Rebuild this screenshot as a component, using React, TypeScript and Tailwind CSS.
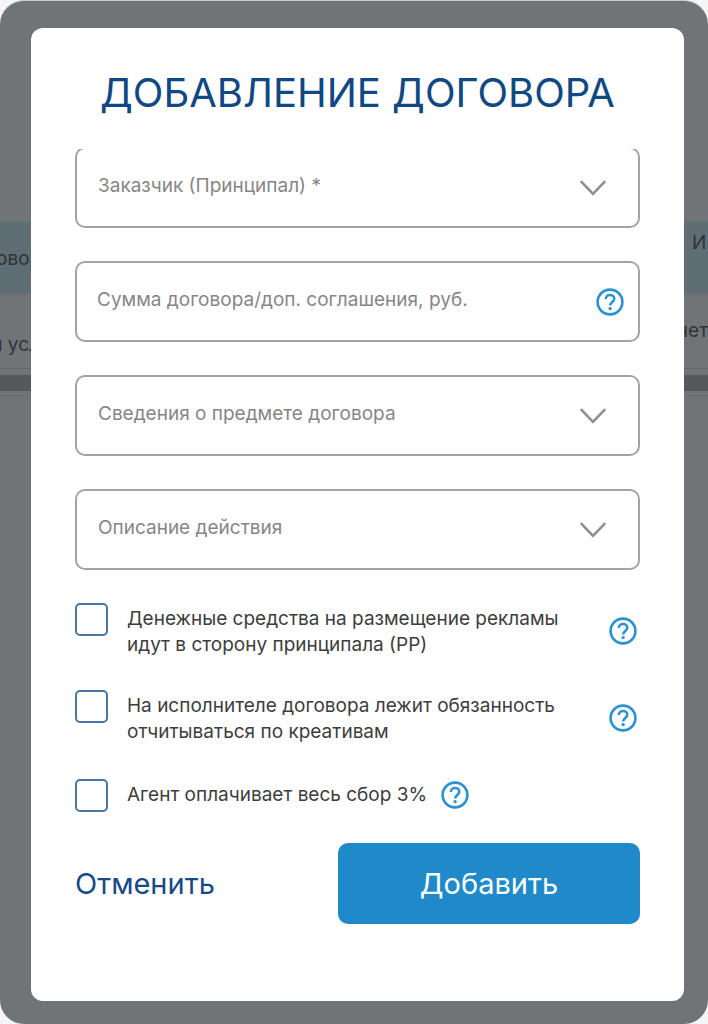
import React, { useState } from "react";

interface SelectFieldProps {
  id: string;
  label: string;
  options: string[];
}

const fieldClass =
  "block w-full h-[81px] rounded-[10px] border-2 border-[#a3a3a3] bg-white text-[19px] text-[#868686] placeholder:text-[#868686] placeholder:opacity-100 focus:outline-none focus:border-[#2089ca]";

function HelpIcon() {
  return (
    <svg viewBox="0 0 28 28" className="w-7 h-7" fill="none" stroke="#2a92d0" aria-hidden="true">
      <circle cx="14" cy="14" r="12.4" strokeWidth="2.6" />
      <path d="M9.8 11C9.8 8.6 11.6 7 14 7s4.3 1.5 4.3 3.7c0 3.2-4.2 3.4-4.2 6.9" strokeWidth="2.5" />
      <circle cx="14.1" cy="20.6" r="1.7" fill="#2a92d0" stroke="none" />
    </svg>
  );
}

function HelpButton({ label }: { label: string }) {
  return (
    <button type="button" aria-label={label} className="shrink-0 cursor-pointer">
      <HelpIcon />
    </button>
  );
}

function SelectField({ id, label, options }: SelectFieldProps) {
  return (
    <div className="relative">
      <select id={id} aria-label={label} defaultValue="" className={`${fieldClass} appearance-none pl-[21px] pr-20 pb-0.5`}>
        <option value="">{label}</option>
        {options.map(o => (
          <option key={o} value={o}>{o}</option>
        ))}
      </select>
      <svg
        viewBox="0 0 28 18"
        className="absolute right-[33px] top-8 w-7 h-[18px] pointer-events-none"
        fill="none"
        stroke="#8f8f8f"
        strokeWidth="2.6"
        aria-hidden="true"
      >
        <path d="M1.8 2.2L14 14.8L26.2 2.2" />
      </svg>
    </div>
  );
}

function CheckRow({ id, children }: { id: string; children: React.ReactNode }) {
  const [checked, setChecked] = useState(false);
  return (
    <>
      <input
        id={id}
        type="checkbox"
        checked={checked}
        onChange={e => setChecked(e.target.checked)}
        className="appearance-none shrink-0 w-[33px] h-[33px] rounded-[5px] border-2 border-[#4a74a4] bg-white checked:bg-[#2089ca] cursor-pointer"
      />
      <label htmlFor={id} className="ml-[19px] text-[19px] leading-[26px] text-[#3d3d3d] cursor-pointer">
        {children}
      </label>
    </>
  );
}

// Contracts table dimmed behind the dialog
function ContractsBackdrop() {
  return (
    <div className="absolute inset-0 overflow-hidden pt-[221px]" aria-hidden="true">
      <table className="w-full table-fixed border-collapse text-[19px] leading-6 text-[#2e3336]">
        <thead>
          <tr className="h-[71px] bg-[#5f6d75] border-b border-[#666a6d]">
            <th className="p-0 pt-3 pb-2 text-left font-normal">
              <span className="block -ml-1">овор</span>
            </th>
            <th className="p-0 pb-7 w-4 text-left font-normal">И</th>
          </tr>
        </thead>
        <tbody>
          <tr className="h-[75px] border-b border-[#63676a]">
            <td className="p-0 pt-7 text-left">
              <span className="block -ml-2">я усл</span>
            </td>
            <td className="p-0 w-4">
              <span className="flex justify-end">чет</span>
            </td>
          </tr>
        </tbody>
      </table>
      <div className="mt-[6px] h-4 bg-[#55595b]" />
      <div className="mt-1 h-px bg-[#6a6e71]" />
    </div>
  );
}

export default function App() {
  return (
    <div className="bg-[#f5f5f5] font-['Inter','Liberation_Sans',sans-serif]">
      <div className="relative flex min-h-screen rounded-[24px] overflow-hidden border-t border-[#c5cccd] bg-[#707477] pt-[27px] pb-[23px] pl-[31px] pr-6">
        <ContractsBackdrop />

        <div role="dialog" aria-labelledby="dialog-title" className="relative flex-1 min-w-0 rounded-[12px] bg-white px-11 pt-10">
          <h2 id="dialog-title" className="text-center text-[40px] leading-[50px] whitespace-nowrap text-[#0f4883]">
            ДОБАВЛЕНИЕ ДОГОВОРА
          </h2>

          <form onSubmit={e => e.preventDefault()}>
            {/* Scrolled field list */}
            <div className="mt-[31px] overflow-hidden">
              <div className="-mt-0.5 flex flex-col gap-[33px]">
                <SelectField id="customer" label="Заказчик (Принципал) *" options={[]} />
                <div className="relative">
                  <input id="amount" type="text" aria-label="Сумма договора/доп. соглашения, руб." placeholder="Сумма договора/доп. соглашения, руб." className={`${fieldClass} pl-5 pr-16 pb-1`} />
                  <div className="absolute right-4 top-[27px] flex">
                    <HelpButton label="Подсказка: сумма" />
                  </div>
                </div>
                <SelectField id="subject" label="Сведения о предмете договора" options={[]} />
                <SelectField id="action" label="Описание действия" options={[]} />
              </div>

              <div className="mt-[33px] flex flex-col gap-[33px]">
                <div className="flex items-start h-[54px]">
                  <CheckRow id="principal">
                    <span className="block pt-[3px]">
                      Денежные средства на размещение рекламы<br />идут в сторону принципала (РР)
                    </span>
                  </CheckRow>
                  <div className="ml-auto mr-[3px] pt-[14px] flex">
                    <HelpButton label="Подсказка: средства" />
                  </div>
                </div>
                <div className="flex items-start h-[54px]">
                  <CheckRow id="executor">
                    <span className="block pt-[3px]">
                      На исполнителе договора лежит обязанность<br />отчитываться по креативам
                    </span>
                  </CheckRow>
                  <div className="ml-auto mr-[3px] pt-[14px] flex">
                    <HelpButton label="Подсказка: отчётность" />
                  </div>
                </div>
                <div className="flex items-center h-9">
                  <CheckRow id="fee">Агент оплачивает весь сбор 3%</CheckRow>
                  <div className="ml-[14px] flex">
                    <HelpButton label="Подсказка: сбор" />
                  </div>
                </div>
              </div>
            </div>

            <div className="mt-[30px] flex items-center justify-between">
              <button type="button" className="text-[29px] text-[#174a86] cursor-pointer">
                Отменить
              </button>
              <button type="submit" className="w-[302px] h-[81px] rounded-[10px] bg-[#2089ca] text-[29px] text-white cursor-pointer">
                Добавить
              </button>
            </div>
          </form>
        </div>
      </div>
    </div>
  );
}
